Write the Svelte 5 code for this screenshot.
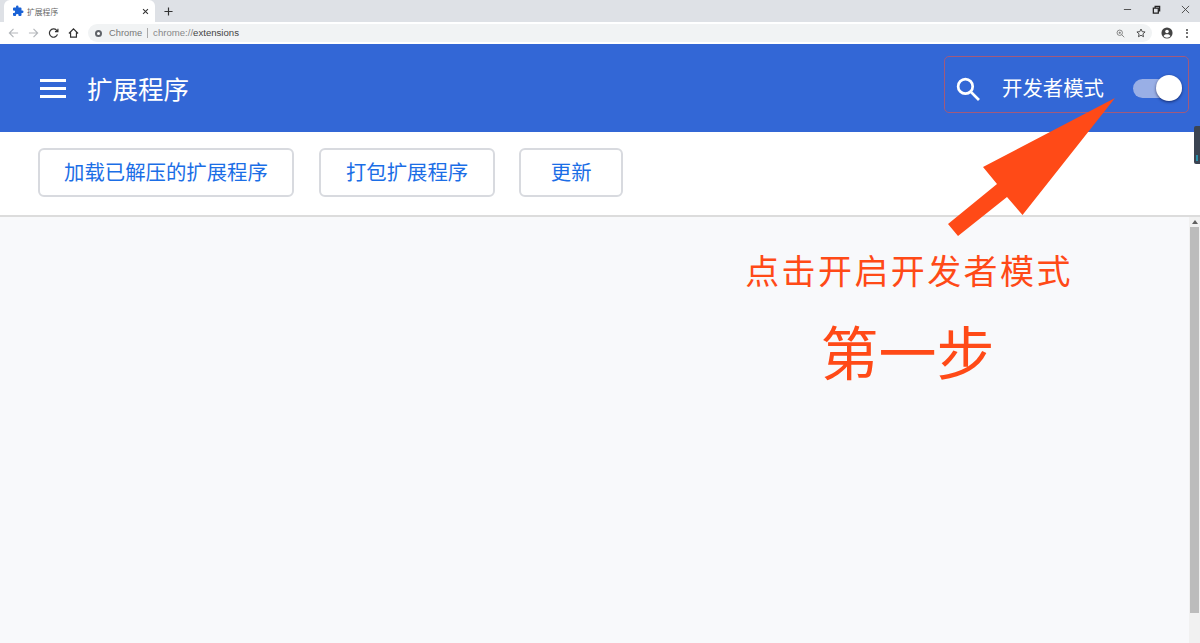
<script>
    const buttons = ['加载已解压的扩展程序', '打包扩展程序', '更新'];
</script>

<div class="page">
    <div class="tabstrip">
        <div class="tab">
            <svg class="puzzle" viewBox="0 0 24 24"><path d="M20.5 11H19V7a2 2 0 0 0-2-2h-4V3.5a2.5 2.5 0 0 0-5 0V5H4a2 2 0 0 0-2 2v3.8h1.5a2.7 2.7 0 0 1 0 5.4H2V20a2 2 0 0 0 2 2h3.8v-1.500a2.700 2.700 0 0 1 5.400 0V22H17a2 2 0 0 0 2-2v-4h1.500a2.500 2.500 0 0 0 0-5z" /></svg>
            <span class="tab-title">扩展程序</span>
            <svg class="tab-close" viewBox="0 0 10 10"><path d="M1.500 1.500l7 7M8.500 1.500l-7 7" /></svg>
        </div>
        <svg class="new-tab" viewBox="0 0 10 10"><path d="M5 .5v9M.5 5h9" /></svg>
        <div class="window-controls">
            <svg viewBox="0 0 10 10"><path d="M1 5h8" /></svg>
            <svg class="restore" viewBox="0 0 10 10"><path d="M1.500 3.500h5.500v5.500h-5.500zM3.500 3.500v-2h5v5h-1.500" /></svg>
            <svg viewBox="0 0 10 10"><path d="M1 1l8 8M9 1l-8 8" /></svg>
        </div>
    </div>

    <div class="browser-bar">
        <div class="nav">
            <svg class="faint" viewBox="0 0 12 12"><path d="M11 6H1.500M6 1.500L1.500 6 6 10.500" /></svg>
            <svg class="faint" viewBox="0 0 12 12"><path d="M1 6h9.500M6 1.500L10.500 6 6 10.500" /></svg>
            <svg viewBox="0 0 12 12"><path d="M10.300 7.500A4.500 4.500 0 1 1 9.300 3L10.800 4.500M10.800 1.300v3.200H7.600" /></svg>
            <svg viewBox="0 0 12 12"><path d="M1 6.500L6 1.500l5 5M2.800 5.500v5h6.400v-5" /></svg>
        </div>
        <div class="omnibox">
            <span class="chrome-dot"></span>
            <span class="scheme">Chrome</span>
            <span class="divider"></span>
            <span class="url">chrome://<b>extensions</b></span>
            <svg class="omni-icon" viewBox="0 0 12 12"><circle cx="5" cy="5" r="3.600" /><path d="M7.700 7.700L11 11M5 3.500v3M3.500 5h3" /></svg>
            <svg class="omni-icon star" viewBox="0 0 12 12"><path d="M6 1.200l1.450 3.200 3.450.35-2.600 2.300.75 3.400L6 8.700l-3.050 1.750.75-3.400-2.600-2.300 3.450-.35z" /></svg>
        </div>
        <svg class="avatar" viewBox="0 0 14 14"><circle class="avatar-bg" cx="7" cy="7" r="6.500" /><circle class="avatar-fg" cx="7" cy="5.300" r="2.100" /><path class="avatar-fg" d="M2.900 10.600c1-1.500 2.500-2 4.100-2s3.100.5 4.100 2c-1 1.200-2.500 2-4.100 2s-3.100-.8-4.100-2z" /></svg>
        <div class="kebab"><i></i><i></i><i></i></div>
    </div>

    <header class="ext-header">
        <div class="burger"><i></i><i></i><i></i></div>
        <h1>扩展程序</h1>
        <div class="header-right">
            <svg class="search" viewBox="0 0 24 24"><circle cx="10" cy="10" r="7" /><path d="M15 15l8 8" /></svg>
            <span class="dev-label">开发者模式</span>
            <div class="toggle"><span class="knob"></span></div>
        </div>
    </header>

    <div class="actions">
        {#each buttons as label}
            <button>{label}</button>
        {/each}
    </div>

    <main class="content"></main>

    <!-- annotation layer drawn over the screenshot -->
    <div class="red-box"></div>
    <svg class="arrow" viewBox="0 0 1200 643"><polygon points="1115,98 1022.500,215 1007,197 958,236 948,224 997,184 983,167" /></svg>
    <div class="note">
        <p class="note-line">点击开启开发者模式</p>
        <p class="note-step">第一步</p>
    </div>
    <div class="side-widget"><span></span></div>
    <div class="scrollbar"><span class="sb-up"></span><span class="thumb"></span></div>
</div>

<style>
    :global(body) {
        margin: 0;
    }

    .page {
        position: relative;
        width: 1200px;
        height: 643px;
        overflow: hidden;
        display: flex;
        flex-direction: column;
        background: #f8f9fb;
        font-family: "Noto Sans CJK SC", "Liberation Sans", sans-serif;
    }

    svg {
        display: block;
        fill: none;
        stroke: #5f6368;
    }

    .tabstrip {
        height: 22px;
        flex-shrink: 0;
        background: #dee1e6;
        display: flex;
        align-items: flex-end;
        padding-left: 4px;
    }

    .tab {
        width: 151px;
        height: 22px;
        background: #fff;
        border-radius: 6px 6px 0 0;
        display: flex;
        align-items: center;
        padding: 0 6px 0 8px;
        box-sizing: border-box;
    }

    .puzzle {
        width: 12px;
        height: 12px;
        fill: #1a62d6;
        stroke: none;
    }

    .tab-title {
        margin-left: 3px;
        font-size: 7.800px;
        color: #666;
        flex: 1;
    }

    .tab-close {
        width: 7px;
        height: 7px;
        stroke: #333;
        stroke-width: 1.500;
    }

    .new-tab {
        width: 9px;
        height: 9px;
        margin: 0 0 6px 9px;
        stroke: #333;
        stroke-width: 1.300;
    }

    .window-controls {
        margin-left: auto;
        display: flex;
        align-self: flex-start;
        gap: 20px;
        padding: 5px 10px 0 0;
    }

    .window-controls svg {
        width: 9px;
        height: 9px;
        stroke: #444;
    }

    .window-controls svg.restore {
        stroke: #222;
        stroke-width: 1.400;
    }

    .browser-bar {
        height: 22px;
        flex-shrink: 0;
        background: #fff;
        display: flex;
        align-items: center;
    }

    .nav {
        display: flex;
        gap: 9px;
        padding-left: 8px;
        width: 79px;
        box-sizing: border-box;
    }

    .nav svg {
        width: 12px;
        height: 12px;
        stroke: #333;
        stroke-width: 1.300;
    }

    .nav svg.faint {
        stroke: #b5b8bc;
    }

    .omnibox {
        width: 1064px;
        height: 18px;
        margin-left: 9px;
        background: #f1f3f4;
        border-radius: 9px;
        display: flex;
        align-items: center;
        padding: 0 6px 0 7px;
        box-sizing: border-box;
        font-family: "Liberation Sans", sans-serif;
        font-size: 9.300px;
    }

    .chrome-dot {
        width: 7px;
        height: 7px;
        border-radius: 50%;
        background: #fff;
        border: 2px solid #5f6368;
        box-sizing: border-box;
    }

    .scheme {
        margin: 0 0 1px 7px;
        color: #777;
    }

    .divider {
        width: 1px;
        height: 10px;
        background: #aaa;
        margin: 0 5px;
    }

    .url {
        color: #888;
        flex: 1;
        font-size: 9.600px;
        margin-bottom: 1px;
    }

    .url b {
        font-weight: 400;
        color: #444;
    }

    .omni-icon {
        width: 9px;
        height: 9px;
        stroke: #666;
    }

    .omni-icon.star {
        width: 10px;
        height: 10px;
        margin-left: 11px;
        stroke: #333;
    }

    .avatar {
        width: 12px;
        height: 12px;
        margin-left: 9px;
        stroke: none;
    }

    .avatar-bg {
        fill: #444;
    }

    .avatar-fg {
        fill: #fff;
    }

    .kebab {
        margin-left: 13px;
        display: flex;
        flex-direction: column;
        gap: 1.500px;
    }

    .kebab i {
        width: 2px;
        height: 2px;
        border-radius: 50%;
        background: #444;
    }

    .ext-header {
        height: 88px;
        flex-shrink: 0;
        background: #3367d6;
        display: flex;
        align-items: center;
        padding-left: 40px;
    }

    .burger {
        display: flex;
        flex-direction: column;
        gap: 5px;
        width: 26px;
    }

    .burger i {
        height: 3px;
        background: #fff;
    }

    h1 {
        margin: -2px 0 0 21px;
        font-size: 25.500px;
        font-weight: 400;
        color: #fff;
    }

    .header-right {
        margin-left: auto;
        display: flex;
        align-items: center;
        padding-right: 18px;
    }

    .search {
        width: 25px;
        height: 25px;
        margin-left: -1px;
        stroke: #fff;
        stroke-width: 2.600;
    }

    .dev-label {
        margin: -2px 0 0 22px;
        font-size: 20.400px;
        color: #fff;
    }

    .toggle {
        position: relative;
        width: 49px;
        height: 19px;
        margin-left: 29px;
        border-radius: 10px;
        background: #99afe6;
    }

    .knob {
        position: absolute;
        right: 0;
        top: -3.500px;
        width: 26px;
        height: 26px;
        border-radius: 50%;
        background: #fff;
        box-shadow: 0 1px 3px rgba(0, 0, 40, 0.6);
    }

    .actions {
        height: 85px;
        flex-shrink: 0;
        background: #fff;
        border-bottom: 2px solid #dcdcdc;
        box-sizing: border-box;
        display: flex;
        align-items: center;
        gap: 24px;
        padding: 0 0 2px 38px;
    }

    button {
        height: 49px;
        min-width: 104px;
        padding: 0 24px 3px;
        background: #fff;
        border: 2px solid #d8dadf;
        border-radius: 6px;
        font: inherit;
        font-size: 20.400px;
        color: #1b6ee6;
    }

    button:first-child {
        margin-right: 1px;
    }

    button:nth-child(2) {
        padding: 0 25px 3px;
    }

    .content {
        flex: 1;
    }

    .red-box {
        position: absolute;
        left: 944px;
        top: 56px;
        width: 245px;
        height: 57px;
        box-sizing: border-box;
        border: 1.500px solid #a25a7c;
        border-radius: 5px;
    }

    .arrow {
        position: absolute;
        inset: 0;
        width: 1200px;
        height: 643px;
        stroke: none;
        fill: #ff4a17;
    }

    .note {
        position: absolute;
        left: 709px;
        top: 247px;
        width: 400px;
        text-align: center;
        color: #ff4a17;
    }

    .note-line {
        margin: 0;
        font-size: 34px;
        line-height: 46px;
        letter-spacing: 2.400px;
    }

    .note-step {
        margin: 17px 0 0 -3px;
        font-size: 58px;
        line-height: 80px;
    }

    .side-widget {
        position: absolute;
        left: 1194px;
        top: 126px;
        width: 6px;
        height: 38px;
        background: #3b4452;
        border-radius: 2px 0 0 2px;
        display: flex;
        align-items: flex-end;
        justify-content: center;
    }

    .side-widget span {
        width: 2px;
        height: 6px;
        margin-bottom: 3px;
        background: #2b8fa8;
    }

    .scrollbar {
        position: absolute;
        left: 1189px;
        top: 217px;
        bottom: 0;
        width: 11px;
        background: #f1f1f1;
        display: flex;
        flex-direction: column;
        align-items: center;
    }

    .sb-up {
        margin-top: 3px;
        border: 3px solid transparent;
        border-top: 0;
        border-bottom: 4px solid #606060;
    }

    .thumb {
        width: 9px;
        height: 386px;
        margin-top: 3px;
        background: #bcbcbc;
    }
</style>
